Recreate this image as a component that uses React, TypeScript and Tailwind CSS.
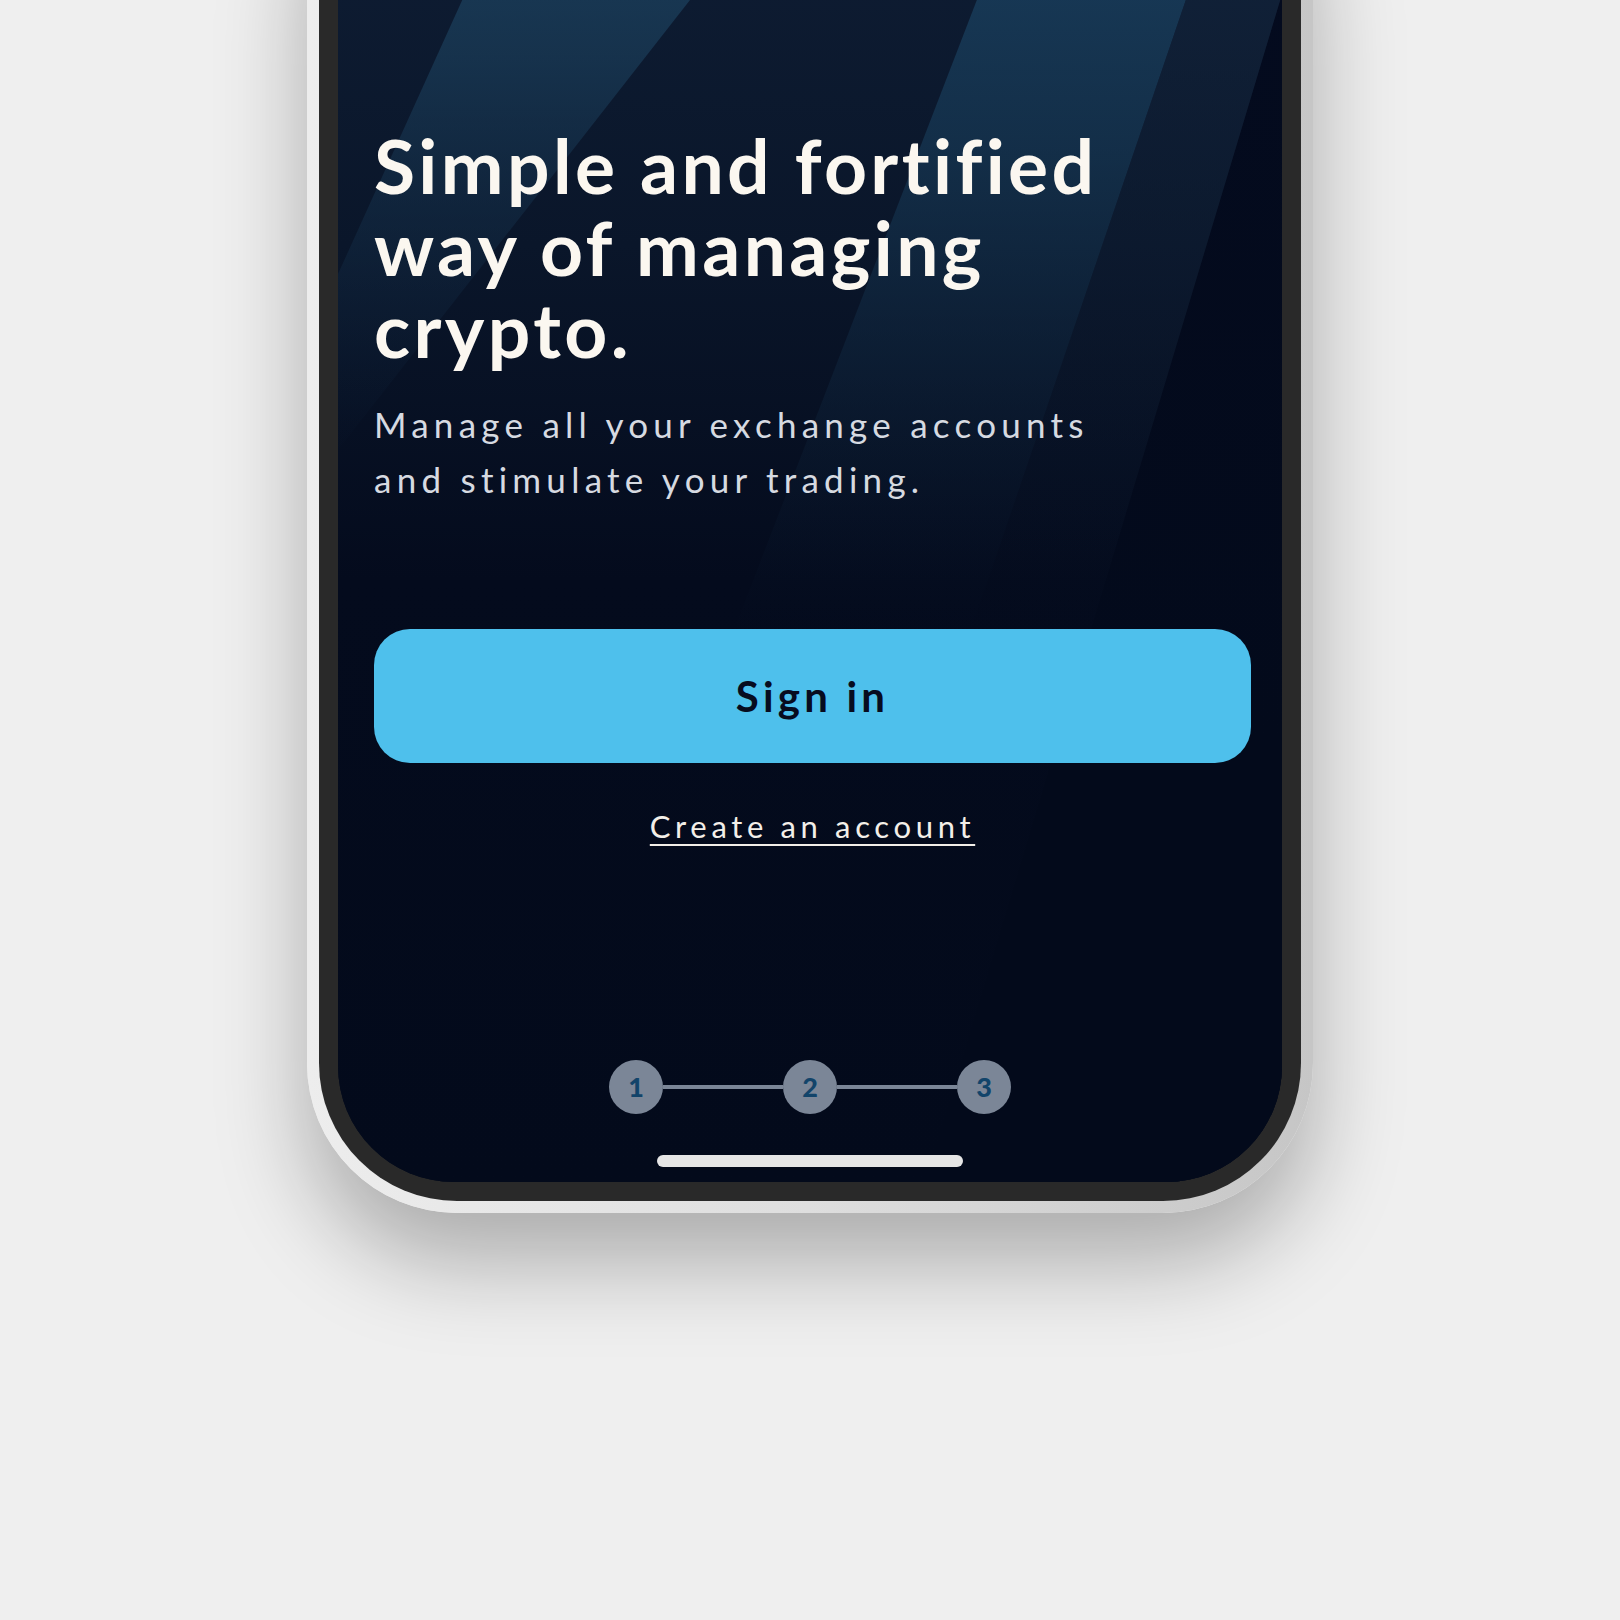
import React from "react";

const steps = ["1", "2", "3"];

function ScreenBackdrop() {
  // light beams drawn over the navy screen
  return (
    <svg
      className="absolute inset-0 h-full w-full"
      viewBox="0 0 944 1338"
      preserveAspectRatio="none"
      aria-hidden
    >
      <defs>
        <linearGradient id="base" x1="0" y1="0" x2="0" y2="1338" gradientUnits="userSpaceOnUse">
          <stop offset="0" stopColor="#0f1e35" />
          <stop offset="0.3" stopColor="#0a162a" />
          <stop offset="0.55" stopColor="#040b1d" />
          <stop offset="1" stopColor="#030a1b" />
        </linearGradient>
        <linearGradient id="beamA" x1="0" y1="0" x2="0" y2="620" gradientUnits="userSpaceOnUse">
          <stop offset="0" stopColor="#1d4462" stopOpacity="0.95" />
          <stop offset="0.35" stopColor="#1a3c58" stopOpacity="0.7" />
          <stop offset="1" stopColor="#102640" stopOpacity="0" />
        </linearGradient>
        <linearGradient id="beamB" x1="0" y1="0" x2="0" y2="790" gradientUnits="userSpaceOnUse">
          <stop offset="0" stopColor="#1b4262" stopOpacity="0.95" />
          <stop offset="0.4" stopColor="#163753" stopOpacity="0.7" />
          <stop offset="1" stopColor="#0c1d33" stopOpacity="0" />
        </linearGradient>
        <linearGradient id="strip" x1="0" y1="0" x2="0" y2="790" gradientUnits="userSpaceOnUse">
          <stop offset="0" stopColor="#13253d" stopOpacity="0.9" />
          <stop offset="1" stopColor="#0a1629" stopOpacity="0" />
        </linearGradient>
        <linearGradient id="dark" x1="0" y1="0" x2="0" y2="900" gradientUnits="userSpaceOnUse">
          <stop offset="0" stopColor="#040b1f" stopOpacity="1" />
          <stop offset="1" stopColor="#030a1b" stopOpacity="1" />
        </linearGradient>
      </defs>
      <rect x="0" y="0" width="944" height="1338" fill="url(#base)" />
      <polygon points="989,0 944,0 944,1338 587,1338" fill="url(#dark)" />
      <polygon points="195,0 474,0 0,606 0,430" fill="url(#beamA)" />
      <polygon points="699,0 901,0 633,786 396,786" fill="url(#beamB)" />
      <polygon points="901,0 989,0 753,786 633,786" fill="url(#strip)" />
    </svg>
  );
}

function Stepper() {
  return (
    <div className="flex items-center justify-center">
      {steps.map((s, i) => (
        <React.Fragment key={s}>
          {i > 0 && <div className="h-[4px] w-[120px] bg-[#7b8697]" />}
          <div className="flex h-[54px] w-[54px] items-center justify-center rounded-full bg-[#7b8697] font-[Lato,sans-serif] text-[27px] font-black text-[#12446a]">
            {s}
          </div>
        </React.Fragment>
      ))}
    </div>
  );
}

export default function App() {
  return (
    <div className="flex h-[1620px] w-full justify-center overflow-hidden bg-[#efefef]">
      <div className="mt-[-187px] h-[1400px] w-[1006px] shrink-0 rounded-[150px] bg-gradient-to-r from-[#ededed] via-[#dedede] to-[#c6c6c6] p-[12px] shadow-[0_50px_90px_rgba(0,0,0,0.28)]">
        <div className="h-full w-full rounded-[138px] bg-[#292929] p-[19px]">
          <div className="relative flex h-full w-full flex-col overflow-hidden rounded-[116px] bg-[#030a1b]">
            <ScreenBackdrop />
            <div className="relative flex flex-1 flex-col pl-[36px] pr-[31px] pt-[280px]">
              <h1 className="font-[Lato,sans-serif] text-[75px] font-bold leading-[82px] tracking-[0.045em] text-[#fbf7f0]">
                Simple and fortified
                <br />
                way of managing
                <br />
                crypto.
              </h1>
              <p className="mt-[27px] font-[Lato,sans-serif] text-[35px] leading-[55px] tracking-[0.15em] text-[#d6dae1]">
                Manage all your exchange accounts
                <br />
                and stimulate your trading.
              </p>
              <button className="mt-[122px] flex h-[134px] w-full items-center justify-center rounded-[36px] bg-[#4ec0ec] font-[Lato,sans-serif] text-[42px] font-bold tracking-[0.1em] text-[#070c1f]">
                Sign in
              </button>
              <a className="mt-[45px] self-center font-[Lato,sans-serif] text-[31px] leading-[36px] tracking-[0.15em] text-[#f3efe9] underline decoration-[2px] underline-offset-[6px]">
                Create an account
              </a>
              <div className="mt-[216px] pr-[5px]">
                <Stepper />
              </div>
              <div className="mt-[41px] mr-[5px] h-[12px] w-[306px] self-center rounded-full bg-[#e6e6e6]" />
            </div>
          </div>
        </div>
      </div>
    </div>
  );
}
